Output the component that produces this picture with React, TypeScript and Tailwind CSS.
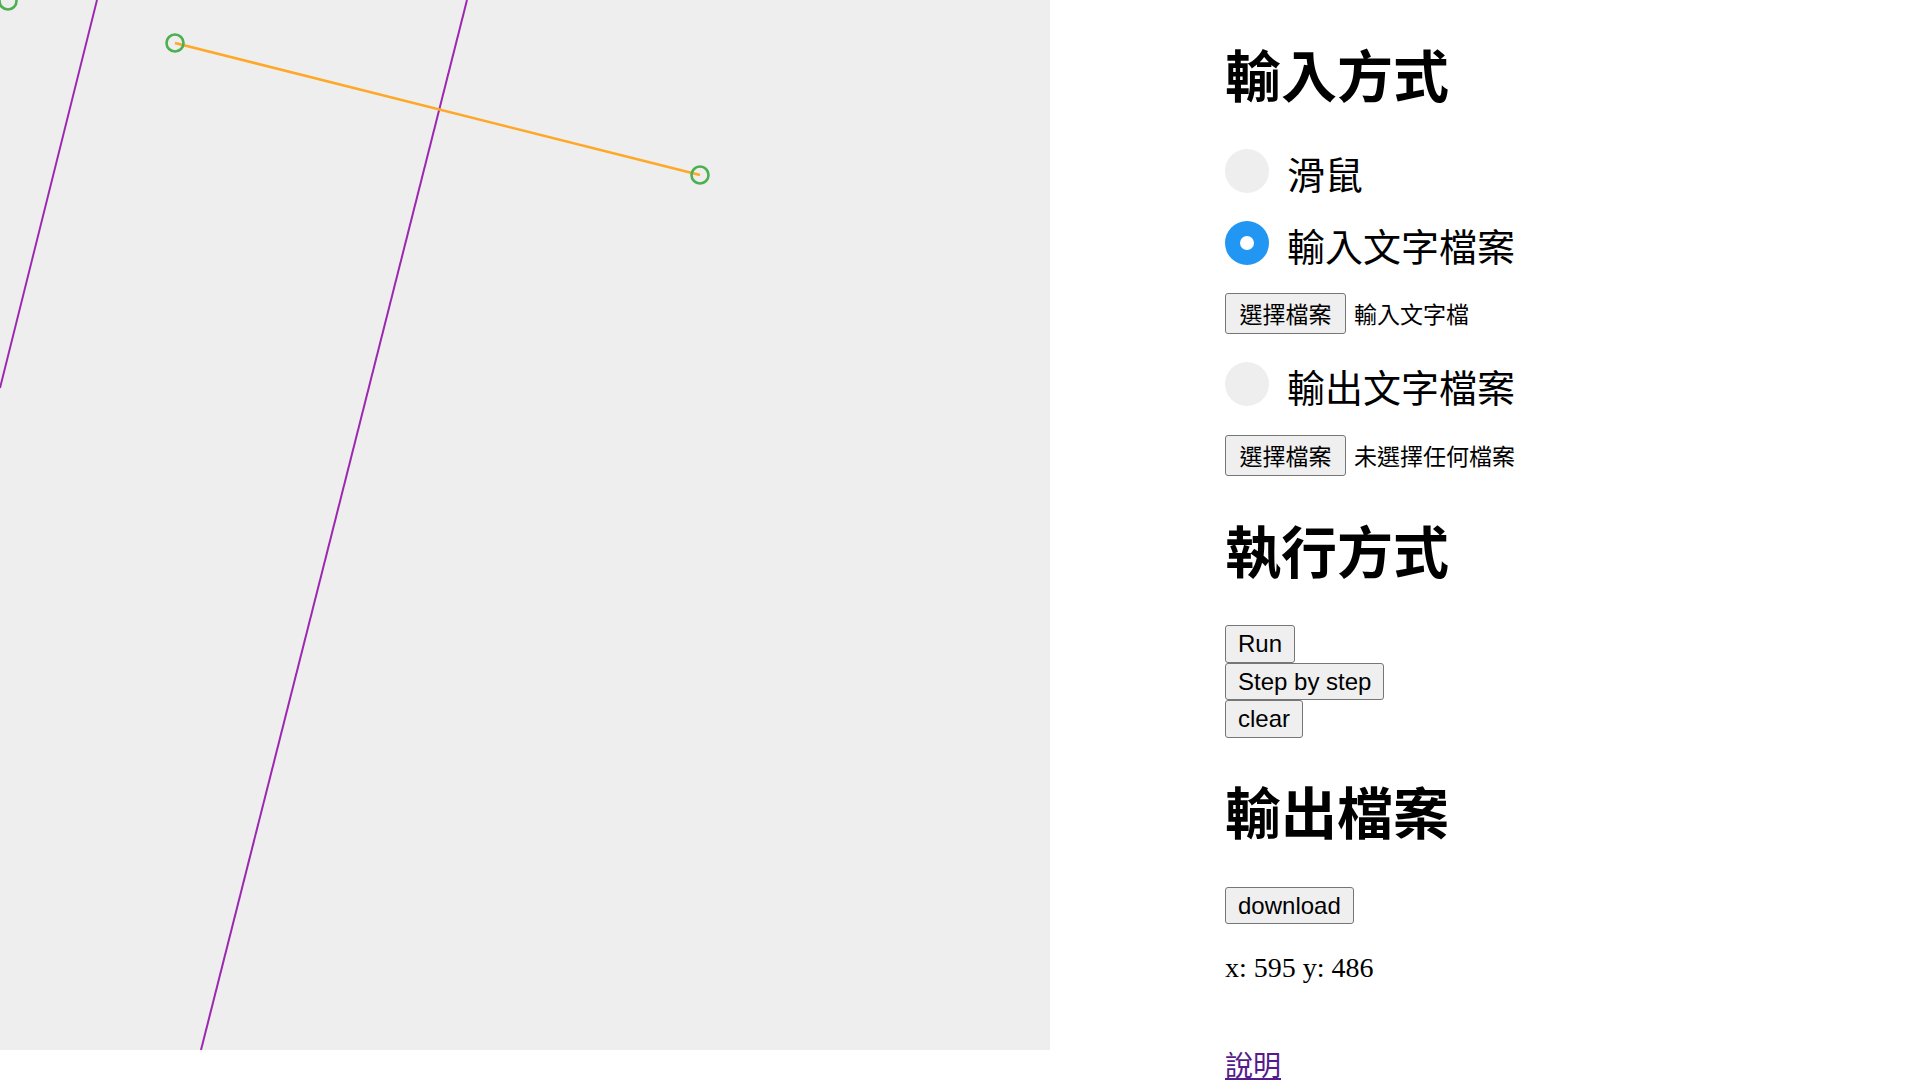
import React from "react";

const cjk = { fontFamily: '"Noto Sans CJK TC", "Noto Sans", sans-serif' };
const arial = { fontFamily: '"Liberation Sans", Arial, sans-serif' };

function Radio({ label, checked }: { label: string; checked?: boolean }) {
  return (
    <div className="flex h-[44px] items-start">
      <span
        className={
          checked
            ? "flex h-[44px] w-[44px] shrink-0 items-center justify-center rounded-full bg-[#2196f3]"
            : "flex h-[44px] w-[44px] shrink-0 items-center justify-center rounded-full bg-[#eeeeee]"
        }
      >
        {checked && <span className="h-[14px] w-[14px] rounded-full bg-white" />}
      </span>
      <span className="ml-[18px] pt-[2px] text-[38px] leading-[44px] text-black whitespace-nowrap" style={cjk}>
        {label}
      </span>
    </div>
  );
}

function FilePicker({ name }: { name: string }) {
  return (
    <div className="flex h-[41px] items-center" style={cjk}>
      <span className="flex h-[41px] w-[121px] items-center justify-center rounded-[3px] border border-[#767676] bg-[#efefef] text-[23px] leading-none text-black">
        選擇檔案
      </span>
      <span className="ml-2 text-[23px] leading-none text-black whitespace-nowrap">{name}</span>
    </div>
  );
}

function Btn({ children, h }: { children: React.ReactNode; h: string }) {
  return (
    <button
      className={`${h} flex items-center rounded-[3px] border border-[#767676] bg-[#efefef] px-3 text-[24px] leading-none text-black`}
      style={arial}
    >
      {children}
    </button>
  );
}

export default function App() {
  return (
    <div className="flex min-h-[1080px] bg-white">
      {/* drawing canvas */}
      <div className="h-[1050px] w-[1050px] shrink-0 bg-[#eeeeee]">
        <svg width="1050" height="1050" viewBox="0 0 1050 1050">
          <line x1="97" y1="0" x2="0" y2="388" stroke="#9c27b0" strokeWidth="2" />
          <line x1="467" y1="0" x2="201" y2="1050" stroke="#9c27b0" strokeWidth="2" />
          <circle cx="8" cy="1" r="8.5" fill="none" stroke="#4caf50" strokeWidth="2.6" />
          <line x1="175" y1="43" x2="700" y2="175" stroke="#ffa726" strokeWidth="2.6" />
          <circle cx="175" cy="43" r="8.5" fill="none" stroke="#4caf50" strokeWidth="2.6" />
          <circle cx="700" cy="175" r="8.5" fill="none" stroke="#4caf50" strokeWidth="2.6" />
        </svg>
      </div>

      {/* controls */}
      <div className="ml-[175px] flex flex-col items-start">
        <h1 className="mt-[45px] h-[56px] text-[56px] font-bold leading-[56px] text-black" style={cjk}>
          輸入方式
        </h1>
        <div className="mt-[48px]">
          <Radio label="滑鼠" />
        </div>
        <div className="mt-[28px]">
          <Radio label="輸入文字檔案" checked />
        </div>
        <div className="mt-[28px]">
          <FilePicker name="輸入文字檔" />
        </div>
        <div className="mt-[28px]">
          <Radio label="輸出文字檔案" />
        </div>
        <div className="mt-[29px]">
          <FilePicker name="未選擇任何檔案" />
        </div>

        <h1 className="mt-[45px] h-[56px] text-[56px] font-bold leading-[56px] text-black" style={cjk}>
          執行方式
        </h1>
        <div className="mt-[48px] flex flex-col items-start">
          <Btn h="h-[38px]">Run</Btn>
          <Btn h="h-[37px]">Step by step</Btn>
          <Btn h="h-[38px]">clear</Btn>
        </div>

        <h1 className="mt-[44px] h-[56px] text-[56px] font-bold leading-[56px] text-black" style={cjk}>
          輸出檔案
        </h1>
        <div className="mt-[49px]">
          <Btn h="h-[37px]">download</Btn>
        </div>
        <p
          className="mt-[28px] text-[28px] leading-[32px] text-black"
          style={{ fontFamily: '"Liberation Serif", "Times New Roman", serif' }}
        >
          x: 595 y: 486
        </p>
        <a href="#" className="mt-[64px] text-[28px] leading-[32px] text-[#551a8b] underline" style={cjk}>
          說明
        </a>
      </div>
    </div>
  );
}
